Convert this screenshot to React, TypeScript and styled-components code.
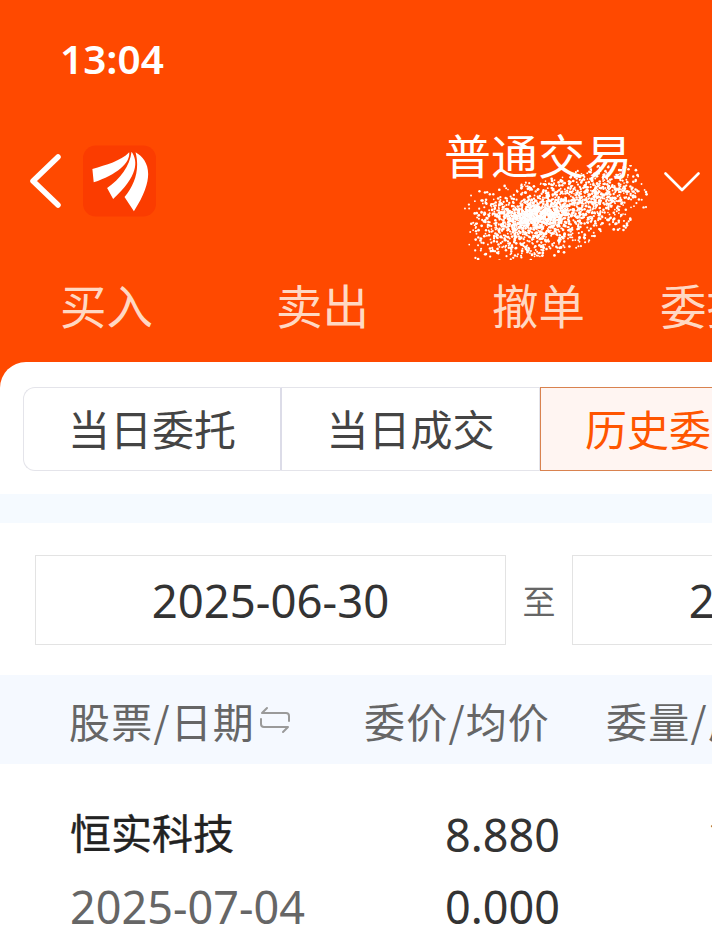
import styled, { createGlobalStyle } from 'styled-components';

const GlobalStyle = createGlobalStyle`
  html, body {
    margin: 0;
    padding: 0;
    background: #fff;
  }
  body {
    font-family: 'Noto Sans CJK SC', 'Noto Sans', sans-serif;
  }
`;

const Screen = styled.div`
  position: relative;
  width: 712px;
  height: 944px;
  overflow: hidden;
  background: #ff4900;
`;

const StatusBar = styled.div`
  height: 120px;
  padding: 35px 0 0 60px;
  box-sizing: border-box;
  font-family: 'Noto Sans', sans-serif;
  font-size: 40.5px;
  line-height: 48px;
  font-weight: 600;
  color: #fff;
`;

const NavBar = styled.div`
  display: flex;
  align-items: flex-start;
  height: 128px;
  padding: 25px 0 0 29px;
  box-sizing: border-box;
`;

const BackIcon = styled.svg`
  width: 32px;
  height: 54px;
  margin-top: 9px;
`;

const Logo = styled.svg`
  width: 73px;
  height: 72px;
  margin-left: 22px;
`;

const Title = styled.div`
  margin-left: 288px;
  margin-top: -16px;
  font-size: 47px;
  line-height: 50px;
  color: #fff;
  white-space: nowrap;
`;

const ChevronDown = styled.svg`
  width: 36px;
  height: 20px;
  margin: 27px 0 0 32px;
`;

const Scribble = styled.svg`
  position: absolute;
  left: 460px;
  top: 165px;
  width: 190px;
  height: 95px;
`;

const TabBar = styled.div`
  display: flex;
  height: 114px;
  padding: 29px 0 0 60px;
  box-sizing: border-box;
  white-space: nowrap;
`;

const Tab = styled.div<{ $width?: number }>`
  flex: 0 0 ${(p) => p.$width ?? 216}px;
  font-size: 46.5px;
  line-height: 54px;
  color: #ffd8c3;
`;

const Sheet = styled.div`
  height: 582px;
  background: #fff;
  border-radius: 26px 0 0 0;
  overflow: hidden;
`;

const Segments = styled.div`
  display: flex;
  width: 800px;
  height: 84px;
  margin: 25px 0 0 23px;
`;

const Segment = styled.div<{ $active?: boolean; $first?: boolean }>`
  flex: 0 0 ${(p) => (p.$first ? 259 : 258)}px;
  box-sizing: border-box;
  text-align: center;
  font-size: 42px;
  line-height: 80px;
  white-space: nowrap;
  overflow: hidden;
  color: ${(p) => (p.$active ? '#ff5500' : '#444')};
  background: ${(p) => (p.$active ? '#fff5f2' : '#fff')};
  border: 1px solid ${(p) => (p.$active ? '#d9824f' : '#e4e4ea')};
  border-right: ${(p) => (p.$first ? '2px solid #dcdce8' : '')};
  border-left: ${(p) => (p.$first || p.$active ? '' : 'none')};
  border-radius: ${(p) => (p.$first ? '12px 0 0 12px' : '0')};
`;

const Band = styled.div`
  height: 29px;
  margin-top: 23px;
  background: #f5faff;
`;

const DateRow = styled.div`
  display: flex;
  align-items: center;
  width: 1100px;
  height: 90px;
  margin: 32px 0 0 35px;
`;

const DateBox = styled.div`
  flex: 0 0 471px;
  box-sizing: border-box;
  height: 90px;
  border: 1px solid #e3e3e3;
  text-align: center;
  font-family: 'Noto Sans', sans-serif;
  font-size: 45.5px;
  line-height: 88px;
  color: #333;
`;

const DateSep = styled.div`
  flex: 0 0 66px;
  text-align: center;
  font-size: 33px;
  color: #666;
`;

const HeadRow = styled.div`
  display: flex;
  align-items: center;
  width: 900px;
  height: 89px;
  margin-top: 30px;
  padding-left: 69px;
  background: #f5f9ff;
  font-size: 41px;
  letter-spacing: 1.2px;
  color: #666;
  white-space: nowrap;
`;

const HeadStock = styled.div`
  display: flex;
  align-items: center;
  flex: 0 0 295px;
`;

const HeadPrice = styled.div`
  flex: 0 0 242px;
`;

const SwapIcon = styled.svg`
  width: 32px;
  height: 30px;
  margin-left: 4px;
`;

const StockRow = styled.div`
  display: grid;
  grid-template-columns: 340px 150px 160px;
  grid-auto-rows: 72px;
  margin-top: 35px;
  padding-left: 70px;
  white-space: nowrap;
`;

const StockName = styled.div`
  font-size: 41px;
  line-height: 72px;
  margin-top: -4px;
  color: #222;
  -webkit-text-stroke: 0.4px #222;
`;

const StockDate = styled.div`
  font-family: 'Noto Sans', sans-serif;
  font-size: 45px;
  line-height: 72px;
  color: #666;
`;

const Price = styled.div`
  font-family: 'Noto Sans', sans-serif;
  font-size: 45px;
  line-height: 72px;
  color: #333;
  text-align: right;
`;

const Volume = styled.div`
  font-family: 'Noto Sans', sans-serif;
  font-size: 45px;
  line-height: 72px;
  padding-left: 147px;
  color: #333;
`;

// the scrubbed account number: a few clusters of thrown dots, tilted up to the right
const clusters = [
  { count: 1150, cx: 72, cy: 56, u: 68, v: 42 },
  { count: 700, cx: 135, cy: 34, u: 52, v: 36 },
  { count: 500, cx: 75, cy: 50, u: 40, v: 16 },
];

const makeDots = () => {
  let seed = 4711;
  const rnd = () => {
    seed = (seed * 16807) % 2147483647;
    return seed / 2147483647;
  };
  const spread = () => rnd() + rnd() - 1;
  const dots: { x: number; y: number; r: number }[] = [];
  clusters.forEach((c) => {
    for (let i = 0; i < c.count; i++) {
      const u = spread() * c.u;
      const v = spread() * c.v;
      dots.push({
        x: c.cx + u + v * 0.15,
        y: c.cy - u * 0.15 + v,
        r: 0.8 + rnd() * 0.6,
      });
    }
  });
  return dots;
};

const dots = makeDots();

export default function App() {
  return (
    <>
      <GlobalStyle />
      <Screen>
        <StatusBar>13:04</StatusBar>
        <NavBar>
          <BackIcon viewBox="0 0 32 54" fill="none">
            <path d="M29 3 L4 27 L29 51" stroke="#fff" strokeWidth="5.5" strokeLinecap="round" strokeLinejoin="round" />
          </BackIcon>
          <Logo viewBox="250 78 218 212">
            <rect x="250" y="78" width="218" height="212" rx="38" fill="#fb3c00" />
            <path d="M278 148 C320 135 362 125 388 98 C392 130 350 165 282 188 Z" fill="#fff" />
            <path d="M322 205 C360 180 390 140 395 97 C415 125 415 170 340 238 Z" fill="#fff" />
            <path d="M374 232 C405 195 420 150 407 98 C445 120 470 170 402 274 Z" fill="#fff" />
          </Logo>
          <Title>普通交易</Title>
          <ChevronDown viewBox="0 0 36 20" fill="none">
            <path d="M1.5 1.5 L18 18 L34.5 1.5" stroke="#fff" strokeWidth="2.6" strokeLinecap="round" strokeLinejoin="round" />
          </ChevronDown>
        </NavBar>
        <Scribble viewBox="0 0 190 95">
          {dots.map((d, i) => (
            <circle key={i} cx={d.x} cy={d.y} r={d.r} fill="#fff" />
          ))}
        </Scribble>
        <TabBar>
          <Tab>买入</Tab>
          <Tab>卖出</Tab>
          <Tab $width={168}>撤单</Tab>
          <Tab>委托</Tab>
        </TabBar>
        <Sheet>
          <Segments>
            <Segment $first>当日委托</Segment>
            <Segment>当日成交</Segment>
            <Segment $active>历史委托</Segment>
          </Segments>
          <Band />
          <DateRow>
            <DateBox>2025-06-30</DateBox>
            <DateSep>至</DateSep>
            <DateBox>2025-07-07</DateBox>
          </DateRow>
          <HeadRow>
            <HeadStock>
              股票/日期
              <SwapIcon viewBox="0 0 32 30" fill="none">
                <path d="M8 3 L3 8 H27 a3 3 0 0 1 3 3 V16" stroke="#9a9a9a" strokeWidth="2" strokeLinecap="round" strokeLinejoin="round" />
                <path d="M24 27 L29 22 H5 a3 3 0 0 1 -3 -3 V14" stroke="#9a9a9a" strokeWidth="2" strokeLinecap="round" strokeLinejoin="round" />
              </SwapIcon>
            </HeadStock>
            <HeadPrice>委价/均价</HeadPrice>
            <div>委量/成交</div>
          </HeadRow>
          <StockRow>
            <StockName>恒实科技</StockName>
            <Price>8.880</Price>
            <Volume>100</Volume>
            <StockDate>2025-07-04</StockDate>
            <Price>0.000</Price>
          </StockRow>
        </Sheet>
      </Screen>
    </>
  );
}
